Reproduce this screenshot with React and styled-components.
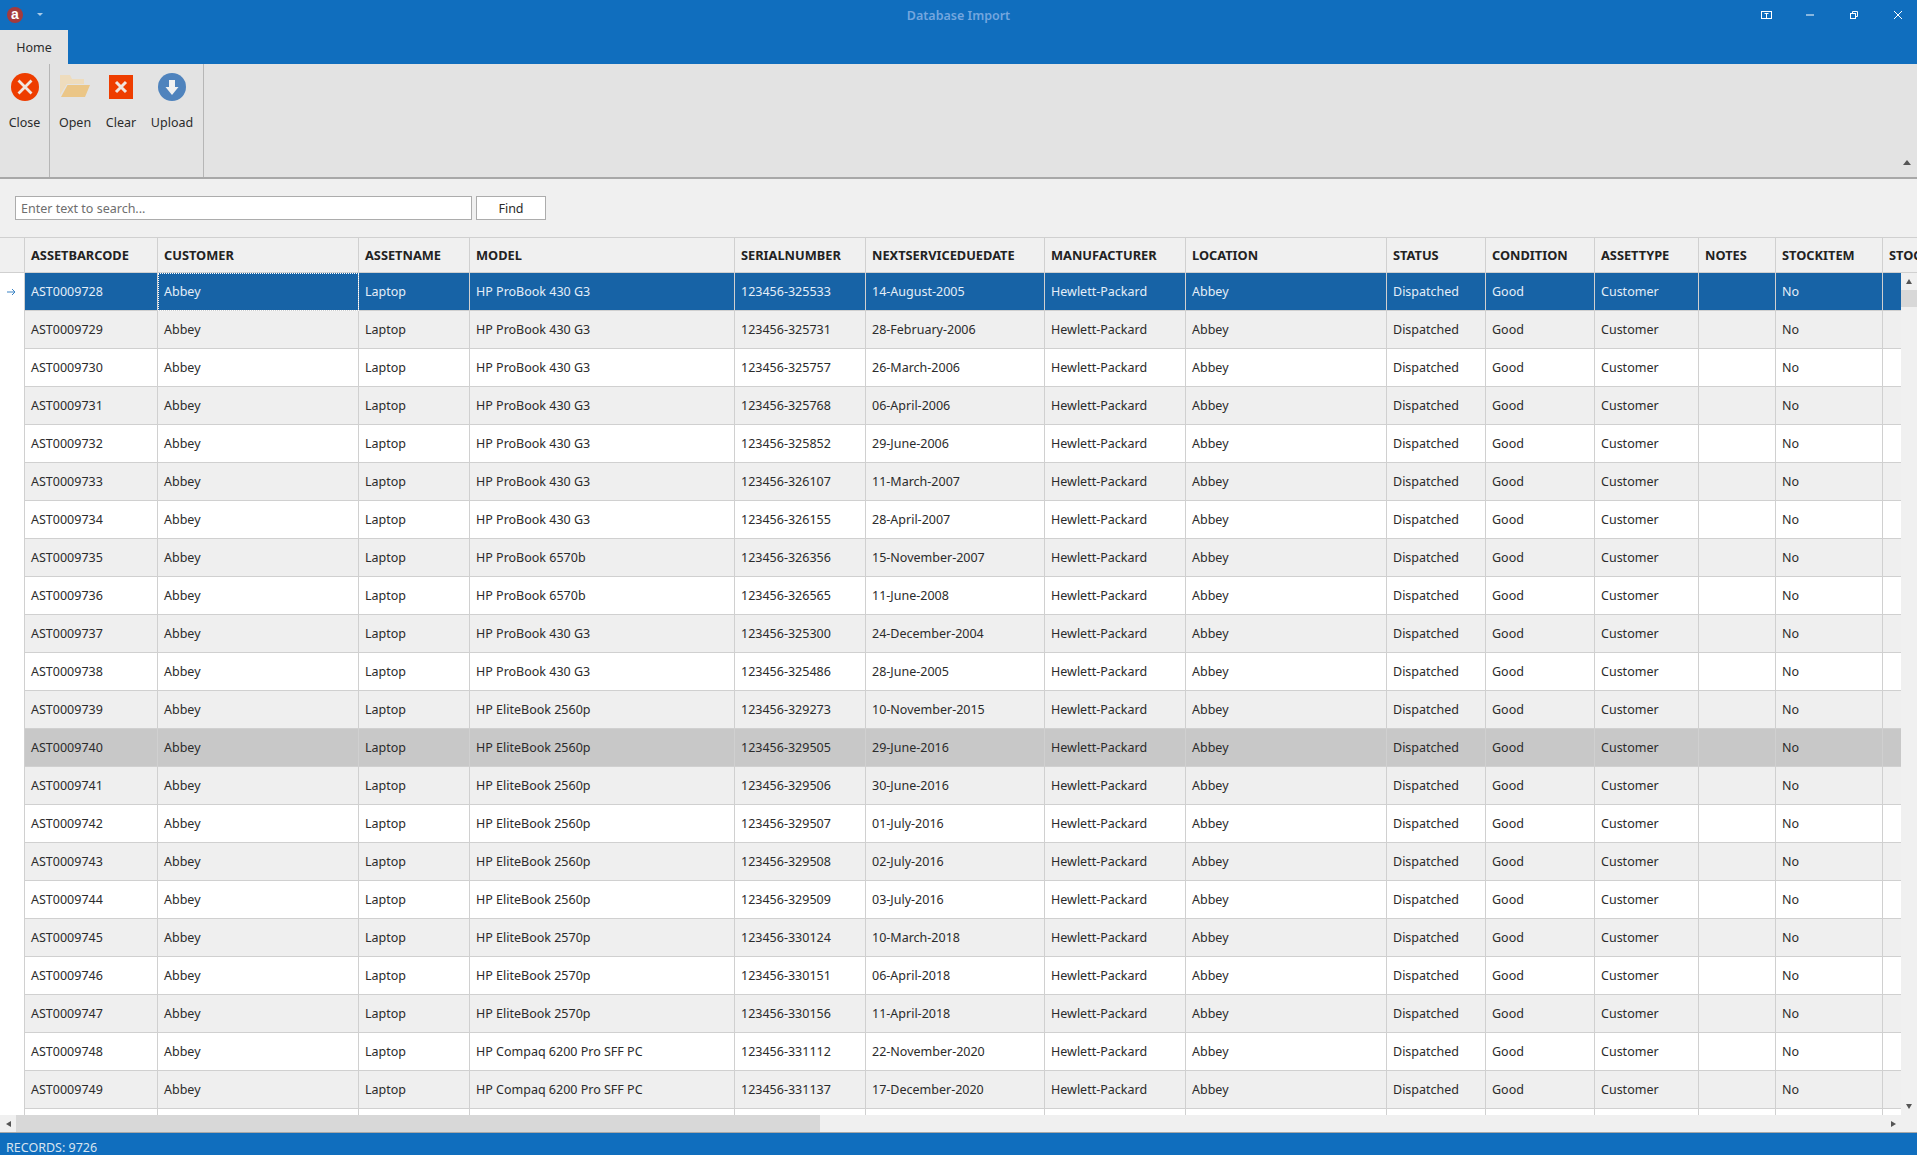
import React from 'react';
import styled, { createGlobalStyle } from 'styled-components';

const COLS = [
  { key: 'code', title: 'ASSETBARCODE', width: 133 },
  { key: 'customer', title: 'CUSTOMER', width: 201 },
  { key: 'name', title: 'ASSETNAME', width: 111 },
  { key: 'model', title: 'MODEL', width: 265 },
  { key: 'serial', title: 'SERIALNUMBER', width: 131 },
  { key: 'date', title: 'NEXTSERVICEDUEDATE', width: 179 },
  { key: 'maker', title: 'MANUFACTURER', width: 141 },
  { key: 'location', title: 'LOCATION', width: 201 },
  { key: 'status', title: 'STATUS', width: 99 },
  { key: 'condition', title: 'CONDITION', width: 109 },
  { key: 'type', title: 'ASSETTYPE', width: 104 },
  { key: 'notes', title: 'NOTES', width: 77 },
  { key: 'stockitem', title: 'STOCKITEM', width: 107 },
  { key: 'stock', title: 'STOCK', width: 80 },
];

const P430 = 'HP ProBook 430 G3';
const P6570 = 'HP ProBook 6570b';
const E2560 = 'HP EliteBook 2560p';
const E2570 = 'HP EliteBook 2570p';
const C6200 = 'HP Compaq 6200 Pro SFF PC';

const RAW = [
  ['AST0009728', P430, '123456-325533', '14-August-2005'],
  ['AST0009729', P430, '123456-325731', '28-February-2006'],
  ['AST0009730', P430, '123456-325757', '26-March-2006'],
  ['AST0009731', P430, '123456-325768', '06-April-2006'],
  ['AST0009732', P430, '123456-325852', '29-June-2006'],
  ['AST0009733', P430, '123456-326107', '11-March-2007'],
  ['AST0009734', P430, '123456-326155', '28-April-2007'],
  ['AST0009735', P6570, '123456-326356', '15-November-2007'],
  ['AST0009736', P6570, '123456-326565', '11-June-2008'],
  ['AST0009737', P430, '123456-325300', '24-December-2004'],
  ['AST0009738', P430, '123456-325486', '28-June-2005'],
  ['AST0009739', E2560, '123456-329273', '10-November-2015'],
  ['AST0009740', E2560, '123456-329505', '29-June-2016'],
  ['AST0009741', E2560, '123456-329506', '30-June-2016'],
  ['AST0009742', E2560, '123456-329507', '01-July-2016'],
  ['AST0009743', E2560, '123456-329508', '02-July-2016'],
  ['AST0009744', E2560, '123456-329509', '03-July-2016'],
  ['AST0009745', E2570, '123456-330124', '10-March-2018'],
  ['AST0009746', E2570, '123456-330151', '06-April-2018'],
  ['AST0009747', E2570, '123456-330156', '11-April-2018'],
  ['AST0009748', C6200, '123456-331112', '22-November-2020'],
  ['AST0009749', C6200, '123456-331137', '17-December-2020'],
];

const rows = RAW.map(([code, model, serial, date]) => ({
  code,
  customer: 'Abbey',
  name: 'Laptop',
  model,
  serial,
  date,
  maker: 'Hewlett-Packard',
  location: 'Abbey',
  status: 'Dispatched',
  condition: 'Good',
  type: 'Customer',
  notes: '',
  stockitem: 'No',
  stock: '',
}));

export default function App() {
  return (
    <Shell>
      <GlobalStyle />
      <TitleBar>
        <TitleRow>
          <AppLogo>a</AppLogo>
          <QuickMenu />
          <WindowTitle>Database Import</WindowTitle>
          <WindowButtons>
            <WindowButton>
              <svg width="11" height="8" viewBox="0 0 11 8" fill="none" stroke="#fff">
                <rect x="0.5" y="0.5" width="10" height="7" />
                <path d="M5.5 3v5M3.5 2.5h4" />
              </svg>
            </WindowButton>
            <WindowButton>
              <svg width="8" height="2" viewBox="0 0 8 2"><path d="M0 1h8" stroke="#fff" /></svg>
            </WindowButton>
            <WindowButton>
              <svg width="8" height="8" viewBox="0 0 8 8" fill="none" stroke="#fff">
                <rect x="0.5" y="2.5" width="5" height="5" />
                <path d="M2.5 2.5v-2h5v5h-2" />
              </svg>
            </WindowButton>
            <WindowButton>
              <svg width="8" height="8" viewBox="0 0 8 8"><path d="M0 0l8 8M8 0l-8 8" stroke="#fff" /></svg>
            </WindowButton>
          </WindowButtons>
        </TitleRow>
        <TabStrip>
          <Tab>Home</Tab>
        </TabStrip>
      </TitleBar>

      <Ribbon>
        <RibbonGroup>
          <RibbonButton $w={49}>
            <IconBox>
              <svg width="28" height="28" viewBox="0 0 28 28">
                <circle cx="14" cy="14" r="14" fill="#ee3d00" />
                <path d="M7.5 7.5l13 13M20.5 7.5l-13 13" stroke="#f0e6e0" strokeWidth="2.8" />
              </svg>
            </IconBox>
            Close
          </RibbonButton>
        </RibbonGroup>
        <RibbonGroup>
          <RibbonButton $w={48}>
            <IconBox>
              <svg width="30" height="24" viewBox="0 0 30 24">
                <path d="M0 0h10l2 4h12v5H7L0 20z" fill="#eedcbd" />
                <path d="M7.5 10H30l-5 12H1z" fill="#ebc687" />
              </svg>
            </IconBox>
            Open
          </RibbonButton>
          <RibbonButton $w={44}>
            <IconBox>
              <svg width="24" height="24" viewBox="0 0 24 24">
                <rect width="24" height="24" fill="#ee3d00" />
                <path d="M7 7l10 10M17 7L7 17" stroke="#f0e6e0" strokeWidth="3" />
              </svg>
            </IconBox>
            Clear
          </RibbonButton>
          <RibbonButton $w={58}>
            <IconBox>
              <svg width="28" height="28" viewBox="0 0 28 28">
                <circle cx="14" cy="14" r="14" fill="#4f83bd" />
                <path d="M11 7h6v7h3.5L14 22l-6.5-8H11z" fill="#f1f1f1" />
              </svg>
            </IconBox>
            Upload
          </RibbonButton>
        </RibbonGroup>
        <CollapseCaret>
          <svg width="8" height="5" viewBox="0 0 8 5"><path d="M4 0l4 5H0z" fill="#555" /></svg>
        </CollapseCaret>
      </Ribbon>

      <SearchBar>
        <SearchInput placeholder="Enter text to search..." readOnly />
        <FindButton>Find</FindButton>
      </SearchBar>

      <Grid>
        <HeaderRow>
          <Indicator $head />
          {COLS.map((c) => (
            <HeaderCell key={c.key} $w={c.width}>{c.title}</HeaderCell>
          ))}
        </HeaderRow>
        <GridBody>
          <RowsClip>
            {rows.map((r, i) => (
              <Row key={r.code} $odd={i % 2 === 1} $selected={i === 0} $hover={i === 12}>
                <Indicator>
                  {i === 0 && (
                    <svg width="9" height="8" viewBox="0 0 9 8" fill="none" stroke="#3b83c4">
                      <path d="M0 4h8M5 1l3 3-3 3" />
                    </svg>
                  )}
                </Indicator>
                {COLS.map((c, j) => (
                  <Cell key={c.key} $w={c.width} $focused={i === 0 && j === 1}>{r[c.key]}</Cell>
                ))}
              </Row>
            ))}
            <Row>
              <Indicator />
              {COLS.map((c) => <Cell key={c.key} $w={c.width} />)}
            </Row>
          </RowsClip>
          <VScroll>
            <ArrowBox><Tri $dir="up" /></ArrowBox>
            <VThumb />
            <ArrowBox><Tri $dir="down" /></ArrowBox>
          </VScroll>
        </GridBody>
        <HScroll>
          <ArrowBox><Tri $dir="left" /></ArrowBox>
          <HThumb />
          <ArrowBox><Tri $dir="right" /></ArrowBox>
        </HScroll>
      </Grid>

      <StatusBar>RECORDS: 9726</StatusBar>
    </Shell>
  );
}

const GlobalStyle = createGlobalStyle`
  html, body {
    margin: 0;
    padding: 0;
    overflow: hidden;
  }
  * {
    box-sizing: border-box;
  }
`;

const Shell = styled.div`
  display: flex;
  flex-direction: column;
  width: 1917px;
  height: 1155px;
  overflow: hidden;
  background: #f0f0f0;
  color: #2b2b2b;
  font-family: "Noto Sans", "Open Sans", sans-serif;
  font-size: 12.5px;
`;

const TitleBar = styled.div`
  height: 64px;
  background: #106ebe;
  display: flex;
  flex-direction: column;
`;

const TitleRow = styled.div`
  position: relative;
  height: 30px;
  display: flex;
  align-items: center;
  padding-left: 7px;
`;

const AppLogo = styled.div`
  width: 16px;
  height: 16px;
  border-radius: 50%;
  background: #a43a3c;
  color: #fff;
  font-family: "Liberation Sans", sans-serif;
  font-weight: 700;
  font-size: 14px;
  line-height: 14px;
  text-align: center;
`;

const QuickMenu = styled.div`
  width: 0;
  height: 0;
  margin: 0 0 2px 14px;
  border-left: 3px solid transparent;
  border-right: 3px solid transparent;
  border-top: 3px solid #a9cbe8;
`;

const WindowTitle = styled.div`
  position: absolute;
  left: 0;
  right: 0;
  top: 7px;
  text-align: center;
  color: #74a6de;
  font-weight: 600;
  font-size: 12.5px;
`;

const WindowButtons = styled.div`
  margin: 0 -3px 0 auto;
  display: flex;
`;

const WindowButton = styled.div`
  width: 44px;
  height: 30px;
  display: flex;
  align-items: center;
  justify-content: center;
`;

const TabStrip = styled.div`
  height: 34px;
  display: flex;
`;

const Tab = styled.div`
  width: 68px;
  background: #e3e3e3;
  display: flex;
  align-items: center;
  justify-content: center;
`;

const Ribbon = styled.div`
  position: relative;
  height: 115px;
  display: flex;
  background: #e3e3e3;
  border-bottom: 2px solid #a8a8a8;
`;

const RibbonGroup = styled.div`
  display: flex;
  border-right: 1px solid #b6b6b6;

  & + & {
    padding: 0 2px 0 1px;
  }
`;

const RibbonButton = styled.div`
  display: flex;
  flex-direction: column;
  align-items: center;
  width: ${(p) => p.$w}px;
  padding-top: 9px;
  gap: 13px;
`;

const IconBox = styled.div`
  height: 28px;
  display: flex;
  align-items: center;
  justify-content: center;
`;

const CollapseCaret = styled.div`
  position: absolute;
  right: 6px;
  bottom: 12px;
  line-height: 0;
`;

const SearchBar = styled.div`
  height: 58px;
  display: flex;
  align-items: flex-start;
  padding: 17px 0 0 15px;
  gap: 4px;
`;

const SearchInput = styled.input`
  width: 457px;
  height: 24px;
  padding: 0 5px;
  border: 1px solid #acacac;
  background: #fff;
  font-family: inherit;
  font-size: 12.5px;

  &::placeholder {
    color: #6e6e6e;
    opacity: 1;
  }
`;

const FindButton = styled.div`
  width: 70px;
  height: 24px;
  border: 1px solid #acacac;
  background: #fff;
  display: flex;
  align-items: center;
  justify-content: center;
`;

const Grid = styled.div`
  flex: 1;
  min-height: 0;
  display: flex;
  flex-direction: column;
  border-bottom: 1px solid #a8a8a8;
`;

const HeaderRow = styled.div`
  height: 36px;
  flex: none;
  display: flex;
  overflow: hidden;
  border-top: 1px solid #d0d0d0;
  border-bottom: 1px solid #d0d0d0;
`;

const Indicator = styled.div`
  width: 25px;
  flex: none;
  background: ${(p) => (p.$head ? '#f0f0f0' : '#fff')};
  border-right: 1px solid #d0d0d0;
  display: flex;
  align-items: center;
  justify-content: center;
  padding-right: 2px;
`;

const HeaderCell = styled.div`
  width: ${(p) => p.$w}px;
  flex: none;
  padding-left: 6px;
  border-right: 1px solid #d0d0d0;
  display: flex;
  align-items: center;
  font-weight: 700;
  font-size: 12.8px;
  white-space: nowrap;
  overflow: hidden;
  color: #222;
`;

const GridBody = styled.div`
  flex: 1;
  min-height: 0;
  display: flex;
  overflow: hidden;
`;

const RowsClip = styled.div`
  flex: 1;
  min-width: 0;
  overflow: hidden;
  background: #fff;
`;

const Row = styled.div`
  display: flex;
  height: 38px;
  background: ${(p) => {
    if (p.$selected) return '#1763a6';
    if (p.$hover) return '#c8c8c8';
    return p.$odd ? '#efefef' : '#fff';
  }};
  color: ${(p) => (p.$selected ? '#e4eef8' : '#2b2b2b')};
`;

const Cell = styled.div`
  width: ${(p) => p.$w}px;
  flex: none;
  padding: 0 0 1px 6px;
  border-right: 1px solid #d0d0d0;
  border-bottom: 1px solid #d0d0d0;
  display: flex;
  align-items: center;
  white-space: nowrap;
  overflow: hidden;
  outline: ${(p) => (p.$focused ? '1px dotted #fff' : 'none')};
  outline-offset: -1px;
`;

const VScroll = styled.div`
  width: 16px;
  flex: none;
  display: flex;
  flex-direction: column;
  background: #f0f0f0;
`;

const VThumb = styled.div`
  height: 17px;
  margin-bottom: auto;
  background: #d8d8d8;
`;

const ArrowBox = styled.div`
  flex: none;
  width: 16px;
  height: 17px;
  display: flex;
  align-items: center;
  justify-content: center;
`;

const Tri = styled.div`
  width: 0;
  height: 0;
  border: 3.5px solid transparent;
  ${(p) => p.$dir === 'up' && 'border-top: 0; border-bottom: 5px solid #555;'}
  ${(p) => p.$dir === 'down' && 'border-bottom: 0; border-top: 5px solid #555;'}
  ${(p) => p.$dir === 'left' && 'border-left: 0; border-right: 5px solid #555;'}
  ${(p) => p.$dir === 'right' && 'border-right: 0; border-left: 5px solid #555;'}
`;

const HScroll = styled.div`
  height: 17px;
  flex: none;
  display: flex;
  background: #f0f0f0;

  & > :last-child {
    margin-left: auto;
    margin-right: 16px;
  }
`;

const HThumb = styled.div`
  width: 804px;
  background: #d8d8d8;
`;

const StatusBar = styled.div`
  height: 22px;
  flex: none;
  background: #106ebe;
  color: #d8e4f0;
  padding: 6px 0 0 6px;
  display: flex;
  align-items: center;
`;
